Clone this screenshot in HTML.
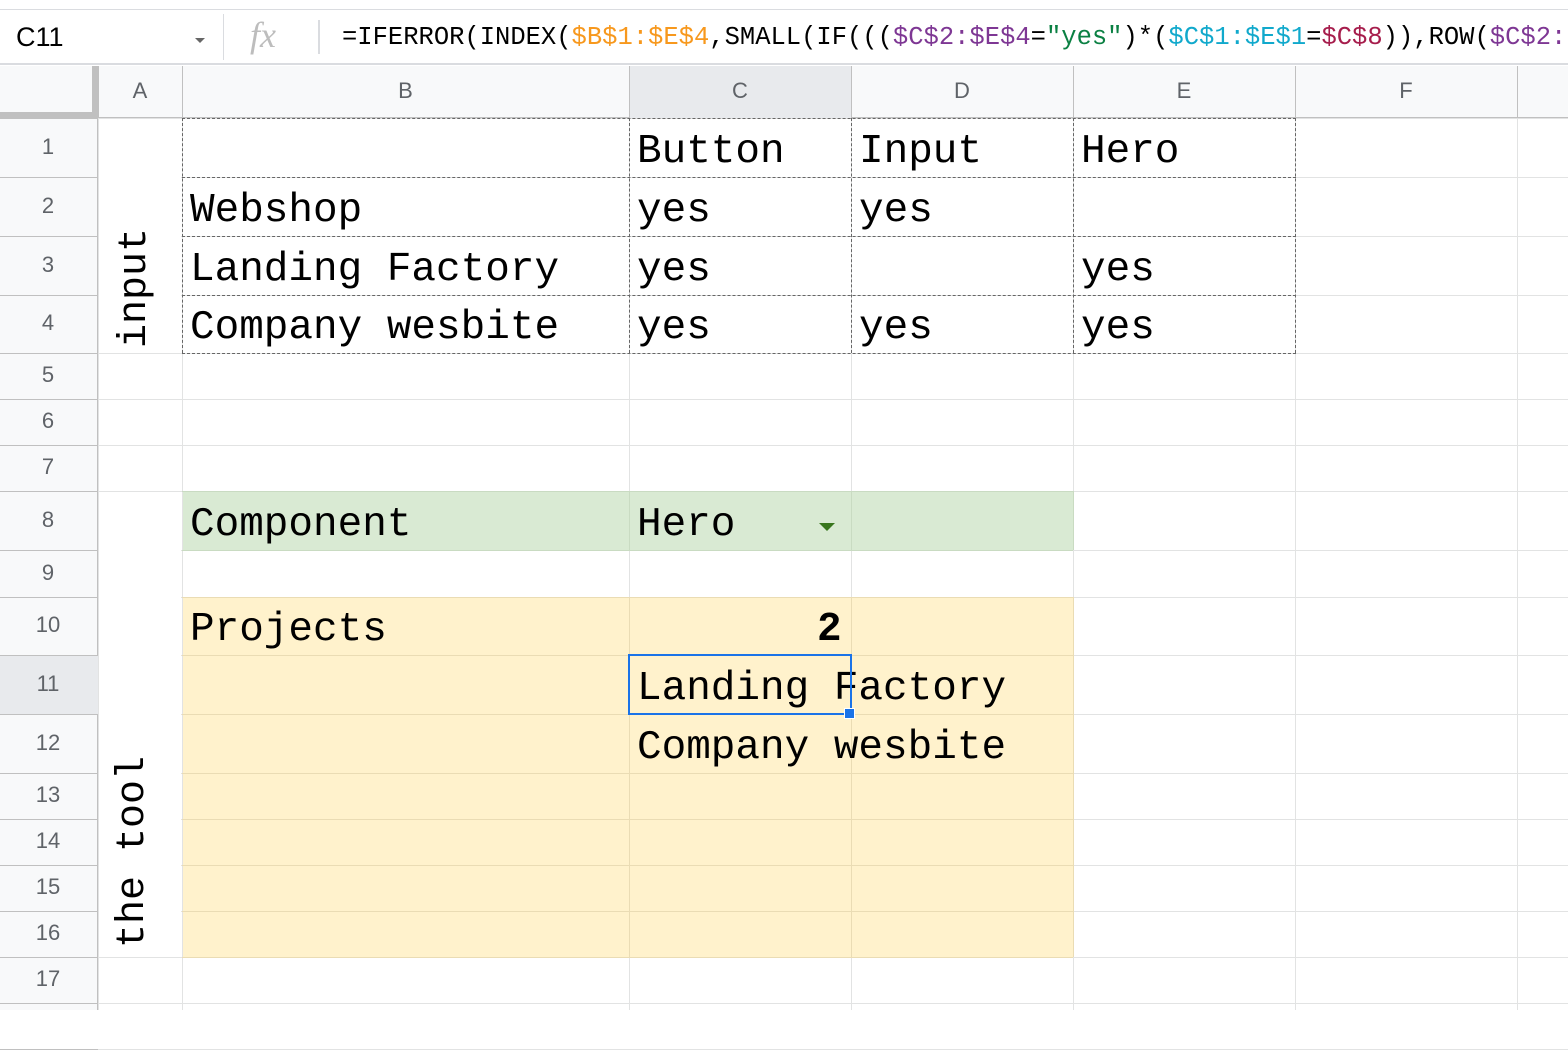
<!DOCTYPE html>
<html><head><meta charset="utf-8"><style>
body{margin:0;width:1568px;height:1010px;overflow:hidden;background:#fff;font-family:"Liberation Sans",sans-serif;position:relative}
.a{position:absolute;box-sizing:border-box}
.t{position:absolute;font-family:"Liberation Mono",monospace;font-size:41px;color:#000;white-space:nowrap;line-height:1}
.h{position:absolute;color:#5f6368;font-size:22px;text-align:center;font-family:"Liberation Sans",sans-serif}
</style></head><body>
<div class="a" style="left:0;top:0;width:1568px;height:10px;background:#fff;border-bottom:1px solid #dadce0"></div>
<div class="a" style="left:0;top:11px;width:1568px;height:54px;background:#fff;border-bottom:2px solid #dadce0"></div>
<div class="a" style="left:16px;top:22px;font-size:27px;color:#000">C11</div>
<div class="a" style="left:195px;top:38px;width:0;height:0;border-left:5px solid transparent;border-right:5px solid transparent;border-top:5px solid #666"></div>
<div class="a" style="left:223px;top:14px;width:1px;height:46px;background:#dadce0"></div>
<div class="a" style="left:250px;top:14px;font-family:'Liberation Serif',serif;font-style:italic;font-size:36px;color:#bdbdbd">fx</div>
<div class="a" style="left:318px;top:20px;width:2px;height:34px;background:#dadce0"></div>
<div class="a" style="left:342px;top:23px;font-family:'Liberation Mono',monospace;font-size:25.5px;white-space:nowrap;color:#000">=IFERROR(INDEX(<span style="color:#f7981d">$B$1:$E$4</span>,SMALL(IF(((<span style="color:#7e3794">$C$2:$E$4</span>=<span style="color:#0b8043">"yes"</span>)*(<span style="color:#11a9cc">$C$1:$E$1</span>=<span style="color:#a61d4c">$C$8</span>)),ROW(<span style="color:#7e3794">$C$2:</span></div>
<div id="g"></div>
<script>
var R=[118,177,236,295,353,399,445,491,550,597,655,714,773,819,865,911,957,1003,1049];
var C=[98,182,629,851,1073,1295,1517,1740];
var s='';
function d(st){s+='<div class="a" style="'+st+'"></div>';}
d('left:182px;top:491px;width:891px;height:59px;background:#d9ead3');
d('left:182px;top:597px;width:891px;height:360px;background:#fff2cc');
for(var i=0;i<R.length;i++){
 d('left:98px;top:'+R[i]+'px;width:1470px;height:1px;background:#e2e3e3');
}
for(var i=0;i<C.length;i++){d('left:'+C[i]+'px;top:118px;width:1px;height:892px;background:#e2e3e3');}
[491,550].forEach(function(y){d('left:182px;top:'+y+'px;width:891px;height:1px;background:#c9dbc2');});
[629,851,1073].forEach(function(x){d('left:'+x+'px;top:491px;width:1px;height:59px;background:#c9dbc2');});
[597,655,714,773,819,865,911,957].forEach(function(y){d('left:182px;top:'+y+'px;width:891px;height:1px;background:#eadcb4');});
[629,851,1073].forEach(function(x){d('left:'+x+'px;top:597px;width:1px;height:360px;background:#eadcb4');});
d('left:99px;top:119px;width:82px;height:233px;background:#fff');
d('left:99px;top:492px;width:82px;height:464px;background:#fff');
for(var i=0;i<5;i++){d('left:182px;top:'+R[i]+'px;width:1114px;height:0;border-top:1px dashed #666');}
[182,629,851,1073,1295].forEach(function(x){d('left:'+x+'px;top:118px;width:0;height:235px;border-left:1px dashed #666');});
d('left:0;top:66px;width:1568px;height:52px;background:#f8f9fa;border-bottom:1px solid #c0c0c0');
d('left:629px;top:66px;width:222px;height:52px;background:#e8eaed');
d('left:0;top:118px;width:98px;height:892px;background:#f8f9fa;border-right:1px solid #c0c0c0');
d('left:0;top:655px;width:98px;height:59px;background:#e8eaed');
for(var i=0;i<C.length;i++)d('left:'+C[i]+'px;top:66px;width:1px;height:52px;background:#c0c0c0');
for(var i=0;i<R.length;i++)d('left:0;top:'+R[i]+'px;width:98px;height:1px;background:#c0c0c0');
d('left:0;top:66px;width:98px;height:52px;background:#f8f9fa');
d('left:92px;top:66px;width:6px;height:52px;background:#c0c0c0');
d('left:0;top:112px;width:98px;height:6px;background:#c0c0c0');
var L='ABCDEF';
for(var i=0;i<6;i++)s+='<div class="h" style="left:'+C[i]+'px;top:78px;width:'+(C[i+1]-C[i])+'px">'+L[i]+'</div>';
for(var i=0;i<17;i++)s+='<div class="h" style="left:0;top:'+((R[i]+R[i+1])/2-14)+'px;width:96px">'+(i+1)+'</div>';
function t(txt,x,r,extra){var y=(R[r]+R[r+1])/2-16;s+='<div class="t" style="left:'+x+'px;top:'+y+'px;'+(extra||'')+'">'+txt+'</div>';}
t('Button',637,0);t('Input',859,0);t('Hero',1081,0);
t('Webshop',190,1);t('yes',637,1);t('yes',859,1);
t('Landing Factory',190,2);t('yes',637,2);t('yes',1081,2);
t('Company wesbite',190,3);t('yes',637,3);t('yes',859,3);t('yes',1081,3);
t('Component',190,7);t('Hero',637,7);
t('Projects',190,9);t('2',817,9,'font-weight:bold');
t('Landing Factory',637,10);t('Company wesbite',637,11);
d('left:819px;top:523px;width:0;height:0;border-left:8px solid transparent;border-right:8px solid transparent;border-top:8px solid #38761d');
d('left:628px;top:654px;width:224px;height:61px;border:2px solid #1a73e8');
d('left:844px;top:708px;width:11px;height:11px;background:#1a73e8;border:1px solid #fff');
s+='<div class="t" style="font-size:40px;left:136px;top:288px;transform:translate(-50%,-50%) rotate(-90deg)">input</div>';
s+='<div class="t" style="font-size:40px;left:134px;top:852px;transform:translate(-50%,-50%) rotate(-90deg)">the tool</div>';
document.getElementById('g').innerHTML=s;
</script>
</body></html>
